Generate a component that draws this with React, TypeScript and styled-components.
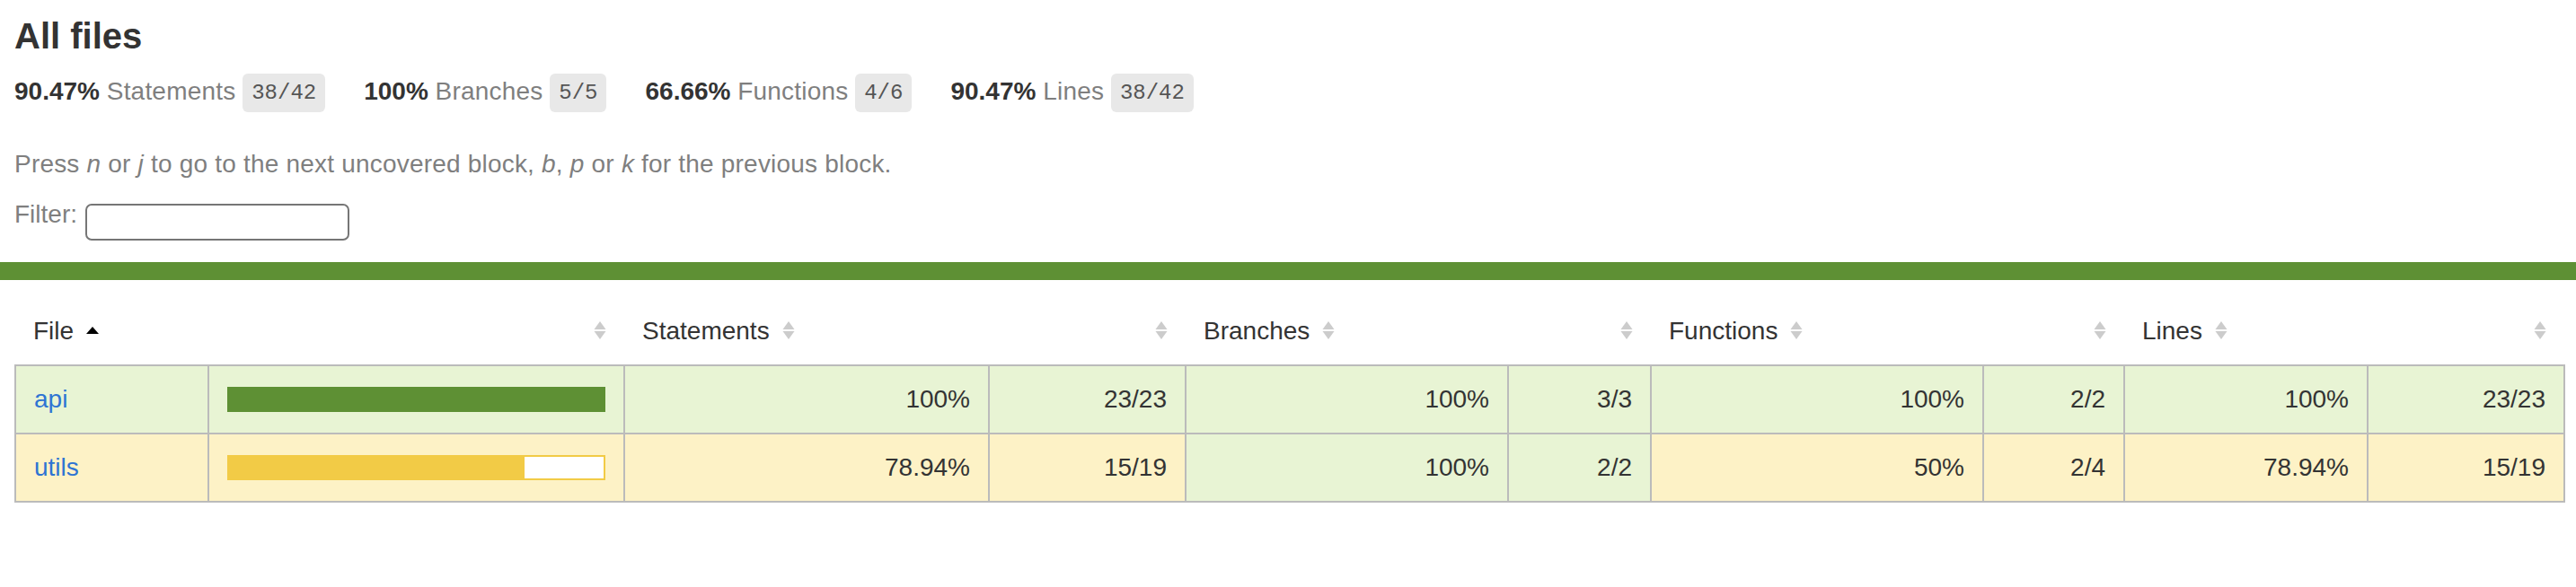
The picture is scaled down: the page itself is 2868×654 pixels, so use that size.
import React from "react";
import styled, { createGlobalStyle } from "styled-components";

const GlobalStyle = createGlobalStyle`
  html, body { margin: 0; padding: 0; background: #ffffff; }
  body {
    font-family: "Liberation Sans", Arial, Helvetica, sans-serif;
    font-size: 28px;
    color: #333333;
  }
  *, *::before, *::after { box-sizing: border-box; }
`;

type Tone = "high" | "medium";

const toneBg: Record<Tone, string> = { high: "#e8f4d4", medium: "#fdf2c6" };
const toneFill: Record<Tone, string> = { high: "#5e9034", medium: "#f2cb46" };

const Page = styled.div`
  width: 2868px;
  min-height: 654px;
`;

const Summary = styled.header`
  padding: 17px 16px 24px 16px;
`;

const Title = styled.h1`
  margin: 0;
  font-size: 40px;
  line-height: 46px;
  font-weight: bold;
`;

const Stats = styled.div`
  display: flex;
  padding: 23px 0 19px;
`;

const Stat = styled.div`
  padding-right: 43px;
  line-height: 32px;
  white-space: nowrap;
`;

const Strong = styled.span`
  font-weight: bold;
`;

const Quiet = styled.span`
  color: #7f7f7f;
  letter-spacing: 0.2px;
`;

const Fraction = styled.span`
  font-family: "Liberation Mono", "DejaVu Sans Mono", monospace;
  font-size: 24px;
  color: #555555;
  background: #e8e8e8;
  padding: 8px 10px;
  border-radius: 6px;
  vertical-align: middle;
`;

const Hint = styled.p`
  margin: 28px 0 0;
  line-height: 32px;
  color: #7f7f7f;
  letter-spacing: 0.2px;
`;

const FilterRow = styled.div`
  display: flex;
  align-items: flex-start;
  gap: 9px;
  margin-top: 24px;
  line-height: 32px;
  color: #7f7f7f;
`;

const SearchInput = styled.input`
  width: 294px;
  height: 41px;
  margin: 4px 0 0;
  padding: 2px 8px;
  border: 2px solid #767676;
  border-radius: 7px;
  background: #ffffff;
  font-size: 24px;
  font-family: inherit;
  outline: none;
`;

const StatusLine = styled.div<{ $tone: Tone }>`
  height: 20px;
  background: ${(p) => toneFill[p.$tone]};
`;

const TableWrap = styled.div`
  padding: 20px 14px 0 16px;
`;

const Table = styled.table`
  width: 100%;
  border-collapse: collapse;
  table-layout: fixed;
`;

const Col = styled.col<{ $w: number }>`
  width: ${(p) => p.$w}px;
`;

const HeadRow = styled.tr`
  border-bottom: 2px solid #bbbbbb;
`;

const Th = styled.th<{ $align: "left" | "right" }>`
  padding: 20px;
  line-height: 34px;
  font-weight: normal;
  white-space: nowrap;
  text-align: ${(p) => p.$align};
  color: #333333;
`;

const Body = styled.tbody`
  border: 2px solid #bbbbbb;
`;

const Row = styled.tr`
  border-bottom: 2px solid #bbbbbb;
`;

const Td = styled.td<{ $tone: Tone; $align: "left" | "right" }>`
  padding: 20px;
  line-height: 34px;
  border-right: 2px solid #bbbbbb;
  background: ${(p) => toneBg[p.$tone]};
  text-align: ${(p) => p.$align};
  vertical-align: middle;
  white-space: nowrap;
  &:last-child {
    border-right: none;
  }
`;

const FileLink = styled.a`
  color: #2e74d3;
  text-decoration: none;
`;

const Chart = styled.div<{ $tone: Tone }>`
  display: flex;
  height: 28px;
  line-height: 0;
  border: 2px solid ${(p) => toneFill[p.$tone]};
  background: #ffffff;
`;

const Fill = styled.div<{ $tone: Tone }>`
  height: 100%;
  background: ${(p) => toneFill[p.$tone]};
`;

const SorterSvg = styled.svg`
  display: inline-block;
  width: 14px;
  height: 20px;
  margin-left: 14px;
  vertical-align: baseline;
`;

const Sorter = ({ sorted }: { sorted?: boolean }) =>
  sorted ? (
    <SorterSvg viewBox="0 0 14 20">
      <polygon points="7,6 14,14 0,14" fill="#000000" />
    </SorterSvg>
  ) : (
    <SorterSvg viewBox="0 0 14 20">
      <polygon points="7,0 13.5,9 0.5,9" fill="#cccccc" />
      <polygon points="0.5,11 13.5,11 7,20" fill="#cccccc" />
    </SorterSvg>
  );

const stats = [
  { pct: "90.47%", label: "Statements", frac: "38/42" },
  { pct: "100%", label: "Branches", frac: "5/5" },
  { pct: "66.66%", label: "Functions", frac: "4/6" },
  { pct: "90.47%", label: "Lines", frac: "38/42" },
];

const colWidths = [215, 463, 406, 219, 359, 159, 370, 157, 271, 219];

const metrics = ["Statements", "Branches", "Functions", "Lines"];

type Cell = { pct: string; abs: string; tone: Tone };

const rows: { file: string; tone: Tone; fill: number; cells: Cell[] }[] = [
  {
    file: "api",
    tone: "high",
    fill: 100,
    cells: [
      { pct: "100%", abs: "23/23", tone: "high" },
      { pct: "100%", abs: "3/3", tone: "high" },
      { pct: "100%", abs: "2/2", tone: "high" },
      { pct: "100%", abs: "23/23", tone: "high" },
    ],
  },
  {
    file: "utils",
    tone: "medium",
    fill: 78.94,
    cells: [
      { pct: "78.94%", abs: "15/19", tone: "medium" },
      { pct: "100%", abs: "2/2", tone: "high" },
      { pct: "50%", abs: "2/4", tone: "medium" },
      { pct: "78.94%", abs: "15/19", tone: "medium" },
    ],
  },
];

export default function App() {
  return (
    <Page>
      <GlobalStyle />
      <Summary>
        <Title>All files</Title>
        <Stats>
          {stats.map((s) => (
            <Stat key={s.label}>
              <Strong>{s.pct}</Strong> <Quiet>{s.label}</Quiet>{" "}
              <Fraction>{s.frac}</Fraction>
            </Stat>
          ))}
        </Stats>
        <Hint>
          Press <em>n</em> or <em>j</em> to go to the next uncovered block,{" "}
          <em>b</em>, <em>p</em> or <em>k</em> for the previous block.
        </Hint>
        <FilterRow>
          <span>Filter:</span>
          <SearchInput type="search" aria-label="Filter" />
        </FilterRow>
      </Summary>
      <StatusLine $tone="high" />
      <TableWrap>
        <Table>
          <colgroup>
            {colWidths.map((w, i) => (
              <Col key={i} $w={w} />
            ))}
          </colgroup>
          <thead>
            <HeadRow>
              <Th $align="left">
                File
                <Sorter sorted />
              </Th>
              <Th $align="right">
                <Sorter />
              </Th>
              {metrics.map((m) => (
                <React.Fragment key={m}>
                  <Th $align="left">
                    {m}
                    <Sorter />
                  </Th>
                  <Th $align="right">
                    <Sorter />
                  </Th>
                </React.Fragment>
              ))}
            </HeadRow>
          </thead>
          <Body>
            {rows.map((r) => (
              <Row key={r.file}>
                <Td $tone={r.tone} $align="left">
                  <FileLink href="#">{r.file}</FileLink>
                </Td>
                <Td $tone={r.tone} $align="left">
                  <Chart $tone={r.tone}>
                    <Fill $tone={r.tone} style={{ width: `${r.fill}%` }} />
                  </Chart>
                </Td>
                {r.cells.map((c, i) => (
                  <React.Fragment key={i}>
                    <Td $tone={c.tone} $align="right">
                      {c.pct}
                    </Td>
                    <Td $tone={c.tone} $align="right">
                      {c.abs}
                    </Td>
                  </React.Fragment>
                ))}
              </Row>
            ))}
          </Body>
        </Table>
      </TableWrap>
    </Page>
  );
}
